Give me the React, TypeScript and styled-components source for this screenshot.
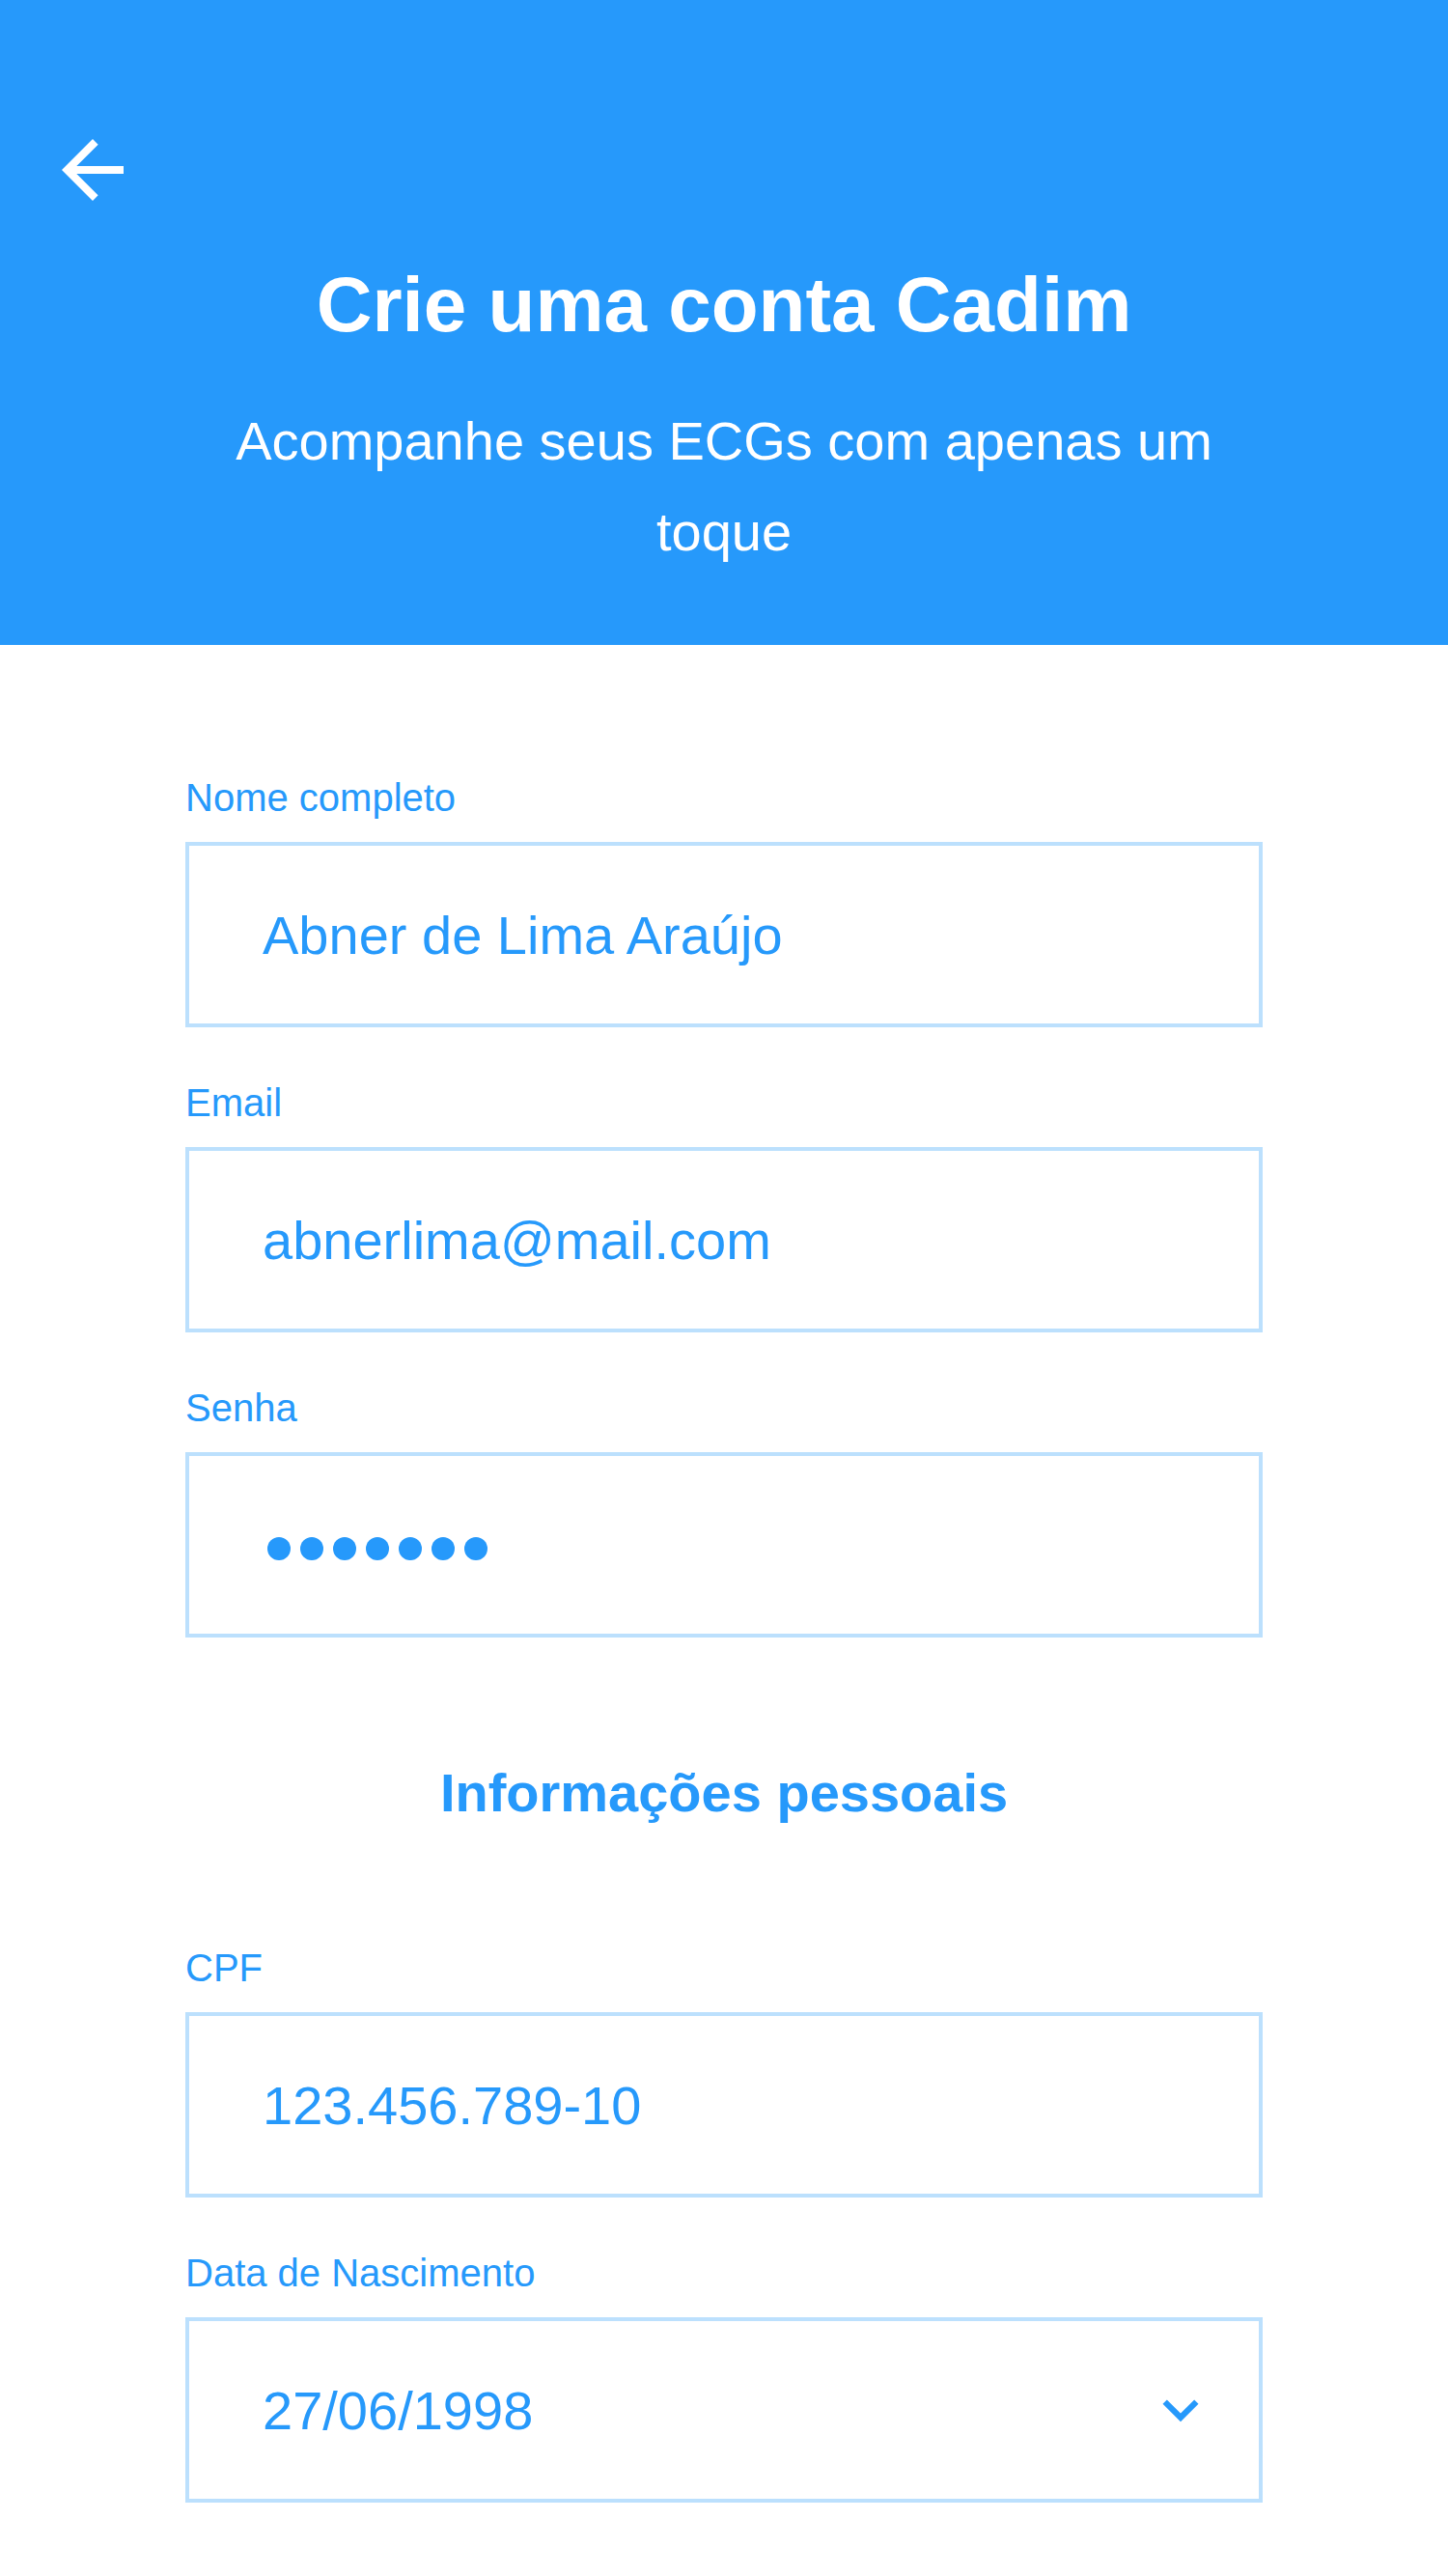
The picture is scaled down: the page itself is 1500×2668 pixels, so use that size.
import React from "react";
import styled, { createGlobalStyle } from "styled-components";

const BLUE = "#2699FB";
const LIGHT = "#BCE0FD";

interface IField {
  label: string;
  value?: string;
  password?: boolean;
  select?: boolean;
}

const GlobalStyle = createGlobalStyle`
  html, body {
    margin: 0;
    padding: 0;
    background: #fff;
    font-family: "Liberation Sans", Arial, sans-serif;
  }
`;

const ArrowBack = () => (
  <svg width="96" height="96" viewBox="0 0 24 24" fill="#fff">
    <path d="M20 11H7.83l5.59-5.59L12 4l-8 8 8 8 1.41-1.41L7.83 13H20v-2z" />
  </svg>
);

const ExpandMore = () => (
  <svg width="74" height="74" viewBox="0 0 24 24" fill={BLUE}>
    <path d="M16.59 8.59L12 13.17 7.41 8.59 6 10l6 6 6-6z" />
  </svg>
);

const Field = ({ label, value, password, select }: IField) => {
  return (
    <FieldWrap>
      <Label>{label}</Label>
      <Box>
        {password ? (
          <Dots>
            {Array.from({ length: 7 }).map((_, i) => <Dot key={i} />)}
          </Dots>
        ) : (
          <Value>{value}</Value>
        )}
        {select && <Caret><ExpandMore /></Caret>}
      </Box>
    </FieldWrap>
  );
};

export default function App() {
  return (
    <Page>
      <GlobalStyle />
      <Header>
        <BackButton aria-label="Voltar"><ArrowBack /></BackButton>
        <Title>Crie uma conta Cadim</Title>
        <Subtitle>Acompanhe seus ECGs com apenas um toque</Subtitle>
      </Header>

      <Form>
        <Field label="Nome completo" value="Abner de Lima Araújo" />
        <Field label="Email" value="abnerlima@mail.com" />
        <Field label="Senha" password />

        <SectionTitle>Informações pessoais</SectionTitle>

        <Field label="CPF" value="123.456.789-10" />
        <Field label="Data de Nascimento" value="27/06/1998" select />
      </Form>
    </Page>
  );
}

const Page = styled.div`
  width: 1500px;
  min-height: 2668px;
  background: #fff;
`;

const Header = styled.header`
  background-color: ${BLUE};
  color: #fff;
  display: flex;
  flex-direction: column;
  align-items: center;
  padding: 128px 0 70px;
  height: 668px;
  box-sizing: border-box;
`;

const BackButton = styled.div`
  align-self: flex-start;
  margin-left: 48px;
  width: 96px;
  height: 96px;
  display: flex;
  cursor: pointer;
`;

const Title = styled.h1`
  margin: 46px 0 0;
  font-size: 80px;
  line-height: 92px;
  font-weight: 700;
`;

const Subtitle = styled.p`
  margin: 48px 0 0;
  max-width: 1100px;
  font-size: 56px;
  line-height: 94px;
  text-align: center;
`;

const Form = styled.main`
  display: flex;
  flex-direction: column;
  padding: 135px 192px 0;
  row-gap: 55px;
`;

const FieldWrap = styled.div`
  display: flex;
  flex-direction: column;
`;

const Label = styled.label`
  font-size: 40px;
  line-height: 46px;
  color: ${BLUE};
  margin-bottom: 23px;
`;

const Box = styled.div`
  height: 192px;
  box-sizing: border-box;
  border: 4px solid ${LIGHT};
  display: flex;
  align-items: center;
  padding: 0 44px 0 76px;
`;

const Value = styled.span`
  font-size: 56px;
  color: ${BLUE};
`;

const Dots = styled.div`
  display: flex;
  column-gap: 10px;
  margin: 8px 0 0 5px;
`;

const Dot = styled.span`
  width: 24px;
  height: 24px;
  border-radius: 50%;
  background: ${BLUE};
`;

const Caret = styled.span`
  margin-left: auto;
  display: flex;
`;

const SectionTitle = styled.h2`
  margin: 74px 0 71px;
  font-size: 56px;
  line-height: 64px;
  font-weight: 700;
  color: ${BLUE};
  text-align: center;
`;
